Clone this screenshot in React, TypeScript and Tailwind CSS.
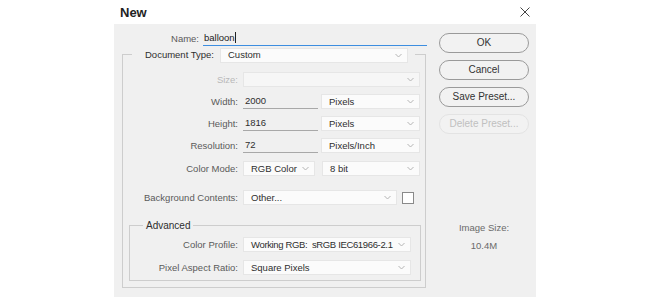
const font = { fontFamily: '"Liberation Sans", Arial, sans-serif' };

const Chevron = () => (
  <svg width="7" height="5" viewBox="0 0 7 5" className="shrink-0">
    <polyline points="0.5,1 3.5,4 6.5,1" fill="none" stroke="#b4b4b4" strokeWidth="1" />
  </svg>
);

interface SelectProps {
  value?: string;
  width: string;
  disabled?: boolean;
  tight?: boolean;
}

const Select = ({ value, width, disabled, tight }: SelectProps) => (
  <div
    className={`${width} h-[15px] flex items-center justify-between pl-[7px] pr-[5px] border border-[#e6e6e6] ${
      disabled ? 'bg-[#f6f6f6]' : 'bg-[#fbfbfb]'
    } text-[#2e2e2e]`}
  >
    <span className={`whitespace-pre leading-none ${tight ? 'tracking-[-0.35px]' : ''}`}>{value}</span>
    <Chevron />
  </div>
);

const Field = ({ value }: { value: string }) => (
  <div className="w-[75px] h-[15px] flex items-center pl-[2px] border-b border-[#a8a8a8] text-[#2e2e2e] leading-none">
    {value}
  </div>
);

const Row = ({
  label,
  labelWidth = 'w-[115px]',
  dim,
  children,
}: {
  label: string;
  labelWidth?: string;
  dim?: boolean;
  children: React.ReactNode;
}) => (
  <div className="flex items-center h-[15px]">
    <div className={`${labelWidth} text-right leading-none ${dim ? 'text-[#b8b8b8]' : 'text-[#5a5a5a]'}`}>{label}</div>
    <div className="ml-[5px] flex items-center gap-[3px]">{children}</div>
  </div>
);

const Button = ({ label, disabled }: { label: string; disabled?: boolean }) => (
  <button
    className={`w-[90px] h-[20px] rounded-full border text-[10px] leading-none bg-[#f2f2f2] ${
      disabled ? 'border-[#e3e3e3] text-[#c0c0c0]' : 'border-[#9a9a9a] text-[#333]'
    }`}
    style={font}
  >
    {label}
  </button>
);

export default function App() {
  return (
    <div className="w-[650px] h-[299px] bg-white overflow-hidden text-[9.5px]" style={font}>
      <div className="ml-[114px] w-[422px]">
        <div className="h-[24px] flex items-center justify-between pl-[6px] pr-[6px]">
          <span className="text-[13px] font-bold text-[#222] leading-none">New</span>
          <svg width="10" height="10" viewBox="0 0 10 10">
            <path d="M0.5 0.5 L9.5 9.5 M9.5 0.5 L0.5 9.5" stroke="#444" strokeWidth="1" />
          </svg>
        </div>

        <div className="h-[273px] bg-[#f0f0f0] flex">
          <div className="w-[316px] pt-[6px]">
            <div className="flex items-end h-[16px]">
              <div className="w-[85px] text-right text-[#5a5a5a] leading-none pb-[3px]">Name:</div>
              <div className="ml-[4px] w-[224px] h-[16px] flex items-center border-b border-[#3d8ee0] text-[#222] pl-[1px] leading-none">
                balloon<span className="w-px h-[11px] bg-[#222]" />
              </div>
            </div>

            <div className="mt-[8px] ml-[8px] w-[304px] border border-[#cdcdcd] pb-[6px]">
              <div className="-mt-[8px] ml-[9px] w-[283px] h-[16px] bg-[#f0f0f0] flex items-center pl-[13px]">
                <span className="text-[#2e2e2e] leading-none w-[67px] whitespace-nowrap">Document Type:</span>
                <div className="ml-[8px]">
                  <Select value="Custom" width="w-[188px]" />
                </div>
              </div>

              <div className="mt-[9px] flex flex-col gap-[7px]">
                <Row label="Size:" dim>
                  <Select width="w-[177px]" disabled />
                </Row>
                <Row label="Width:">
                  <Field value="2000" />
                  <Select value="Pixels" width="w-[99px]" />
                </Row>
                <Row label="Height:">
                  <Field value="1816" />
                  <Select value="Pixels" width="w-[99px]" />
                </Row>
                <Row label="Resolution:">
                  <Field value="72" />
                  <Select value="Pixels/Inch" width="w-[99px]" />
                </Row>
              </div>
              <div className="mt-[8px]">
                <Row label="Color Mode:">
                  <Select value="RGB Color" width="w-[72px]" />
                  <div className="ml-[4px]">
                    <Select value="8 bit" width="w-[98px]" />
                  </div>
                </Row>
              </div>
              <div className="mt-[14px]">
                <Row label="Background Contents:">
                  <Select value="Other..." width="w-[154px]" />
                  <div className="ml-[2px] w-[12px] h-[12px] bg-white border border-[#8a8a8a]" />
                </Row>
              </div>

              <div className="mt-[20px] ml-[6px] w-[292px] border border-[#cdcdcd] pb-[5px]">
                <div className="-mt-[8px] ml-[13px] h-[16px] w-fit px-[3px] bg-[#f0f0f0] flex items-center text-[#2e2e2e] text-[10px] leading-none">
                  Advanced
                </div>
                <div className="mt-[3px] flex flex-col gap-[8px]">
                  <Row label="Color Profile:" labelWidth="w-[108px]">
                    <Select value="Working RGB:  sRGB IEC61966-2.1" width="w-[168px]" tight />
                  </Row>
                  <Row label="Pixel Aspect Ratio:" labelWidth="w-[108px]">
                    <Select value="Square Pixels" width="w-[168px]" />
                  </Row>
                </div>
              </div>
            </div>
          </div>

          <div className="ml-[9px] w-[90px] pt-[9px] flex flex-col">
            <div className="flex flex-col gap-[7px]">
              <Button label="OK" />
              <Button label="Cancel" />
              <Button label="Save Preset..." />
              <Button label="Delete Preset..." disabled />
            </div>
            <div className="mt-[89px] text-center text-[#6a6a6a] leading-none">Image Size:</div>
            <div className="mt-[8px] text-center text-[#6a6a6a] leading-none">10.4M</div>
          </div>
        </div>
      </div>
    </div>
  );
}
